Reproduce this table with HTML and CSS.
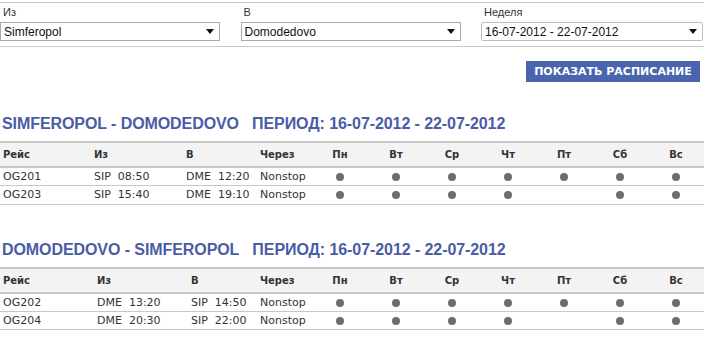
FILE: index.html
```html
<!DOCTYPE html>
<html lang="ru">
<head>
<meta charset="utf-8">
<link rel="stylesheet" href="styles.css">
</head>
<body>
<div class="filters">
  <div class="field">
    <div class="label">Из</div>
    <div class="select"><span>Simferopol</span><svg class="arrow" width="8" height="5" viewBox="0 0 8 5"><path d="M0 0H8L4 5Z"/></svg></div>
  </div>
  <div class="field">
    <div class="label">В</div>
    <div class="select"><span>Domodedovo</span><svg class="arrow" width="8" height="5" viewBox="0 0 8 5"><path d="M0 0H8L4 5Z"/></svg></div>
  </div>
  <div class="field">
    <div class="label">Неделя</div>
    <div class="select select-round"><span>16-07-2012 - 22-07-2012</span><svg class="arrow" width="8" height="5" viewBox="0 0 8 5"><path d="M0 0H8L4 5Z"/></svg></div>
  </div>
</div>
<div class="actions"><button class="btn">ПОКАЗАТЬ РАСПИСАНИЕ</button></div>

<section class="route">
  <h2 class="route-title">SIMFEROPOL - DOMODEDOVO&nbsp;&nbsp; ПЕРИОД: 16-07-2012 - 22-07-2012</h2>
  <table class="sched sched-a">
    <colgroup><col class="c-flight"><col class="c-from"><col class="c-to"><col class="c-via"><col class="c-day"><col class="c-day"><col class="c-day"><col class="c-day"><col class="c-day"><col class="c-day"><col class="c-day"></colgroup>
    <thead><tr><th>Рейс</th><th>Из</th><th>В</th><th>Через</th><th class="d">Пн</th><th class="d">Вт</th><th class="d">Ср</th><th class="d">Чт</th><th class="d">Пт</th><th class="d">Сб</th><th class="d">Вс</th></tr></thead>
    <tbody>
      <tr><td>OG201</td><td>SIP&nbsp;&nbsp;08:50</td><td>DME&nbsp;&nbsp;12:20</td><td>Nonstop</td><td class="d"><i class="dot"></i></td><td class="d"><i class="dot"></i></td><td class="d"><i class="dot"></i></td><td class="d"><i class="dot"></i></td><td class="d"><i class="dot"></i></td><td class="d"><i class="dot"></i></td><td class="d"><i class="dot"></i></td></tr>
      <tr><td>OG203</td><td>SIP&nbsp;&nbsp;15:40</td><td>DME&nbsp;&nbsp;19:10</td><td>Nonstop</td><td class="d"><i class="dot"></i></td><td class="d"><i class="dot"></i></td><td class="d"><i class="dot"></i></td><td class="d"><i class="dot"></i></td><td class="d"></td><td class="d"><i class="dot"></i></td><td class="d"><i class="dot"></i></td></tr>
    </tbody>
  </table>
</section>

<section class="route">
  <h2 class="route-title">DOMODEDOVO - SIMFEROPOL&nbsp;&nbsp; ПЕРИОД: 16-07-2012 - 22-07-2012</h2>
  <table class="sched sched-b">
    <colgroup><col class="c-flight"><col class="c-from"><col class="c-to"><col class="c-via"><col class="c-day"><col class="c-day"><col class="c-day"><col class="c-day"><col class="c-day"><col class="c-day"><col class="c-day"></colgroup>
    <thead><tr><th>Рейс</th><th>Из</th><th>В</th><th>Через</th><th class="d">Пн</th><th class="d">Вт</th><th class="d">Ср</th><th class="d">Чт</th><th class="d">Пт</th><th class="d">Сб</th><th class="d">Вс</th></tr></thead>
    <tbody>
      <tr><td>OG202</td><td>DME&nbsp;&nbsp;13:20</td><td>SIP&nbsp;&nbsp;14:50</td><td>Nonstop</td><td class="d"><i class="dot"></i></td><td class="d"><i class="dot"></i></td><td class="d"><i class="dot"></i></td><td class="d"><i class="dot"></i></td><td class="d"><i class="dot"></i></td><td class="d"><i class="dot"></i></td><td class="d"><i class="dot"></i></td></tr>
      <tr><td>OG204</td><td>DME&nbsp;&nbsp;20:30</td><td>SIP&nbsp;&nbsp;22:00</td><td>Nonstop</td><td class="d"><i class="dot"></i></td><td class="d"><i class="dot"></i></td><td class="d"><i class="dot"></i></td><td class="d"><i class="dot"></i></td><td class="d"></td><td class="d"><i class="dot"></i></td><td class="d"><i class="dot"></i></td></tr>
    </tbody>
  </table>
</section>
</body>
</html>
```
FILE: styles.css
```css
* { box-sizing: border-box; }
html, body { margin: 0; padding: 0; background: #fff; }
body { font-family: "Liberation Sans", Arial, sans-serif; color: #222; width: 708px; }

.filters {
  margin-top: 2px;
  width: 704px;
  border-top: 1px solid #c8c8c8;
  border-bottom: 1px solid #c8c8c8;
  display: grid;
  grid-template-columns: 220px 220px 222px;
  column-gap: 20.5px;
  padding: 3px 0 5px;
}
.label { font-size: 11px; line-height: 13px; color: #333; padding-left: 3px; height: 16px; }
.select {
  height: 19px;
  border: 1px solid #a9a9a9;
  display: flex;
  align-items: center;
  justify-content: space-between;
  padding: 0 5px 0 3px;
  font-size: 12px;
  color: #111;
  background: #fff;
}
.select-round { border-radius: 2px; border-color: #bdbdbd; }
.arrow { fill: #111; }

.actions { display: flex; justify-content: flex-end; padding: 14px 8px 0 0; }
.btn {
  background: #4a64ad;
  color: #fff;
  border: 0;
  height: 21px;
  width: 174px;
  padding: 0;
  font-family: "DejaVu Sans", Verdana, sans-serif;
  font-weight: bold;
  font-size: 11px;
}

.route-title {
  margin: 0;
  font-family: "Liberation Sans", Arial, sans-serif;
  font-size: 16px;
  letter-spacing: -0.08px;
  font-weight: bold;
  color: #4a5ca6;
  padding-left: 2px;
  line-height: 20px;
  white-space: pre;
}
.route:first-of-type .route-title { margin-top: 32px; }
.route + .route .route-title { margin-top: 35px; }

.sched {
  margin-top: 7px;
  width: 704px;
  border-collapse: collapse;
  table-layout: fixed;
  font-family: "DejaVu Sans", Verdana, sans-serif;
  font-size: 11px;
  color: #333;
}
.sched th, .sched td {
  text-align: left;
  padding: 0 0 0 3px;
  white-space: nowrap;
  border-bottom: 1px solid #c8c8c8;
}
.sched thead th {
  background: #f3f3f3;
  border-top: 2px solid #c8c8c8;
  border-bottom: 2px solid #c8c8c8;
  height: 25px;
  font-size: 10px;
  font-weight: bold;
  color: #333;
}
.sched td { height: 18.5px; }
.sched .d { text-align: center; padding: 0; }
.c-flight { width: 91px; }
.c-from { width: 92px; }
.c-to { width: 74px; }
.c-via { width: 55px; }
.c-day { width: 56px; }
.sched-b .c-from { width: 94px; }
.sched-b .c-to { width: 72px; }
.sched-b td:nth-child(2), .sched-b td:nth-child(3) { padding-left: 6px; }
.sched-b th:nth-child(2), .sched-b th:nth-child(3) { padding-left: 6px; }

.dot {
  display: inline-block;
  width: 8px;
  height: 8px;
  border-radius: 50%;
  background: #6d6d6d;
  vertical-align: middle;
}
```
